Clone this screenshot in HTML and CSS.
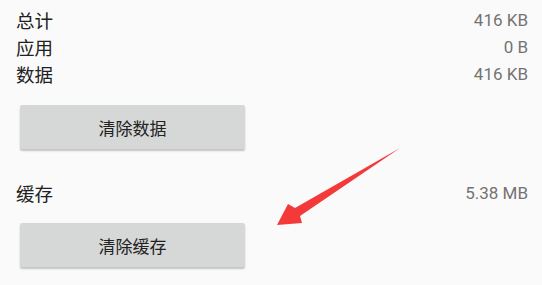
FILE: index.html
```html
<!DOCTYPE html>
<html lang="zh">
<head>
<meta charset="utf-8">
<link rel="stylesheet" href="styles.css">
</head>
<body>
<div class="page">
  <div class="rows">
    <div class="row"><span class="label">总计</span><span class="value">416 KB</span></div>
    <div class="row"><span class="label">应用</span><span class="value">0 B</span></div>
    <div class="row"><span class="label">数据</span><span class="value">416 KB</span></div>
  </div>
  <button class="btn btn-first">清除数据</button>
  <div class="row cache-row"><span class="label">缓存</span><span class="value">5.38 MB</span></div>
  <button class="btn btn-second">清除缓存</button>
  <svg class="arrow" width="542" height="285" viewBox="0 0 542 285">
    <polygon points="400,148 300,216 302,223 277,225 288,204 295,208" fill="#f4393b"/>
  </svg>
</div>
</body>
</html>
```
FILE: styles.css
```css
html, body {
  margin: 0;
  padding: 0;
  background: #fafafa;
}
body {
  width: 542px;
  height: 285px;
  overflow: hidden;
  font-family: "Noto Sans CJK SC", Roboto, sans-serif;
}
.page {
  position: relative;
  padding: 7px 14px 0 16px;
  display: flex;
  flex-direction: column;
  align-items: stretch;
}
.rows {
  display: flex;
  flex-direction: column;
}
.row {
  display: flex;
  justify-content: space-between;
  align-items: center;
  height: 27px;
}
.label {
  font-size: 18.5px;
  color: #212121;
  line-height: 27px;
}
.value {
  font-family: Roboto, "Noto Sans CJK SC", sans-serif;
  font-size: 17px;
  color: #737373;
  line-height: 27px;
}
.btn {
  align-self: flex-start;
  margin-left: 4px;
  width: 225px;
  height: 44px;
  border: none;
  border-radius: 2px;
  background: #d6d7d7;
  box-shadow: 0 2px 2px rgba(0, 0, 0, 0.22);
  font-family: "Noto Sans CJK SC", sans-serif;
  font-size: 17px;
  color: #222222;
  padding: 0;
}
.btn-first {
  margin-top: 17px;
}
.cache-row {
  margin-top: 31px;
}
.btn-second {
  margin-top: 16px;
}
.arrow {
  position: absolute;
  left: 0;
  top: 0;
  pointer-events: none;
}
```
